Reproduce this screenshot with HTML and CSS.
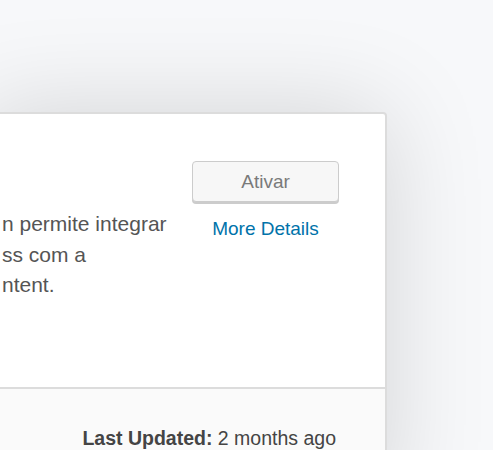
FILE: index.html
```html
<!DOCTYPE html>
<html lang="pt">
<head>
<meta charset="utf-8">
<title>Plugin card</title>
<link rel="stylesheet" href="styles.css">
</head>
<body>
<div class="page">
  <div class="card">
    <div class="card-top">
      <div class="desc">
        <p>n permite integrar<br>ss com a<br>ntent.</p>
      </div>
      <div class="actions">
        <button class="btn" type="button">Ativar</button>
        <a class="more" href="#">More Details</a>
      </div>
    </div>
    <div class="card-bottom">
      <div class="updated"><strong>Last Updated:</strong> 2 months ago</div>
    </div>
  </div>
</div>
</body>
</html>
```
FILE: styles.css
```css
html, body {
  margin: 0;
  padding: 0;
  height: 100%;
  overflow: hidden;
  background: #f7f8fa;
}
.page {
  padding-top: 112px;
  font-family: "Liberation Sans", Arial, sans-serif;
}
.card {
  margin-left: -20px;
  width: 403px;
  background: #fff;
  border: 2px solid #dcdcdc;
  border-radius: 4px;
  box-shadow: 0 0 100px rgba(0, 0, 0, 0.15);
}
.card-top {
  box-sizing: border-box;
  display: flex;
  justify-content: space-between;
  height: 273px;
  padding: 47px 46px 0 20px;
}
.desc {
  padding-top: 48px;
}
.desc p {
  margin: 0;
  font-size: 21px;
  line-height: 30.5px;
  color: #555;
}
.actions {
  display: flex;
  flex-direction: column;
  align-items: center;
  width: 147px;
}
.btn {
  width: 147px;
  height: 41px;
  box-sizing: border-box;
  background: #f7f7f7;
  border: 1.5px solid #cccccc;
  border-radius: 4px;
  box-shadow: 0 2px 0 #cccccc;
  font-family: "Liberation Sans", Arial, sans-serif;
  font-size: 19px;
  color: #7a7a7a;
  padding: 0;
}
.more {
  margin-top: 15px;
  font-size: 19px;
  line-height: 24px;
  color: #0073aa;
  text-decoration: none;
}
.card-bottom {
  box-sizing: border-box;
  border-top: 2px solid #dcdcdc;
  background: #fafafa;
  height: 120px;
  display: flex;
  justify-content: flex-end;
  padding: 35px 49px 0 0;
}
.updated {
  font-size: 19.5px;
  line-height: 28px;
  color: #444;
}
.updated strong {
  font-weight: 700;
}
```
